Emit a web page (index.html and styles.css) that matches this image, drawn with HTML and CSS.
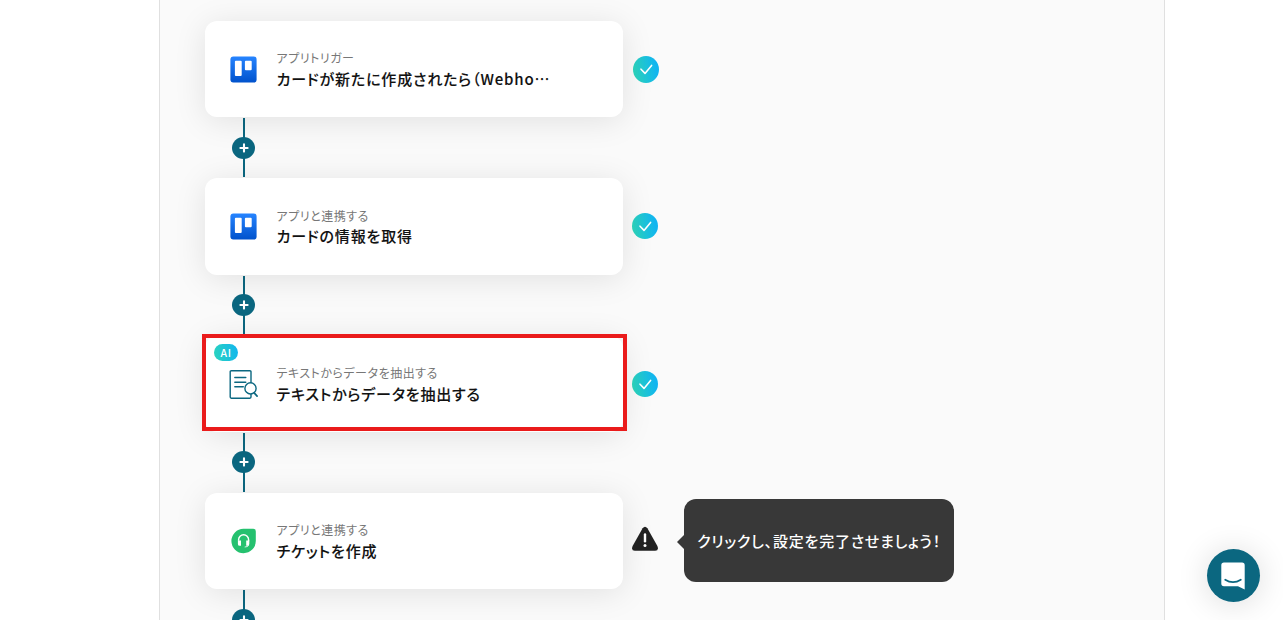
FILE: index.html
```html
<!DOCTYPE html>
<html lang="ja">
<head>
    <meta charset="UTF-8">
    <meta name="viewport" content="width=device-width, initial-scale=1.0">
    <title>フロー設定</title>
    <link rel="stylesheet" href="styles.css">
</head>
<body>
    <svg class="defs" width="0" height="0">
        <defs>
            <linearGradient id="trello" x1="0" y1="0" x2="0" y2="1">
                <stop offset="0" stop-color="#2684ff"/>
                <stop offset="1" stop-color="#0052cc"/>
            </linearGradient>
            <symbol id="icon-trello" viewBox="0 0 28 28">
                <rect x="1.4" y="1.4" width="26.2" height="26.2" rx="3" fill="url(#trello)"/>
                <rect x="5.9" y="5.7" width="6.8" height="15.4" rx="1" fill="#fff"/>
                <rect x="15.9" y="5.7" width="6.8" height="9.6" rx="1" fill="#fff"/>
            </symbol>
            <symbol id="icon-check" viewBox="0 0 26 26">
                <path d="M8 13.2l4 4.2 6.6-8" fill="none" stroke="#fff" stroke-width="1.6" stroke-linecap="round" stroke-linejoin="round"/>
            </symbol>
            <symbol id="icon-plus" viewBox="0 0 10 10">
                <path d="M5 1.4v7.2M1.4 5h7.2" fill="none" stroke="#fff" stroke-width="2.1" stroke-linecap="round"/>
            </symbol>
        </defs>
    </svg>

    <main class="canvas">
        <div class="step">
            <div class="card">
                <svg class="icon"><use href="#icon-trello"/></svg>
                <div class="text">
                    <p class="label">アプリトリガー</p>
                    <p class="title">カードが新たに作成されたら（Webho…</p>
                </div>
            </div>
            <span class="status first"><svg><use href="#icon-check"/></svg></span>
        </div>
        <div class="connector"><button class="add"><svg><use href="#icon-plus"/></svg></button></div>

        <div class="step">
            <div class="card">
                <svg class="icon"><use href="#icon-trello"/></svg>
                <div class="text">
                    <p class="label">アプリと連携する</p>
                    <p class="title">カードの情報を取得</p>
                </div>
            </div>
            <span class="status"><svg><use href="#icon-check"/></svg></span>
        </div>
        <div class="connector"><button class="add"><svg><use href="#icon-plus"/></svg></button></div>

        <div class="step">
            <div class="card selected">
                <span class="badge">AI</span>
                <svg class="icon" viewBox="0 0 28 28" fill="none" stroke="#0b6780" stroke-width="1.4" stroke-linecap="round">
                    <path d="M22 13V1.8Q22 .7 20.9.7H2.3Q1.2.7 1.2 1.8v25.3q0 1.1 1.1 1.1h18.6q1.1 0 1.1-1.1v-3"/>
                    <path d="M5.8 7.5h11M5.8 12.2h11M5.8 16.7h8.5"/>
                    <circle cx="21.5" cy="18.4" r="5.6" fill="#fff"/>
                    <path d="M25.4 23.2l2.7 2.9" stroke-width="1.7"/>
                </svg>
                <div class="text">
                    <p class="label">テキストからデータを抽出する</p>
                    <p class="title">テキストからデータを抽出する</p>
                </div>
            </div>
            <span class="status"><svg><use href="#icon-check"/></svg></span>
        </div>
        <div class="connector"><button class="add"><svg><use href="#icon-plus"/></svg></button></div>

        <div class="step">
            <div class="card">
                <svg class="icon" viewBox="0 0 28 28">
                    <path d="M14.5 1.8h9.7q2.6 0 2.6 2.6V14a12.2 12.2 0 1 1-12.3-12.2z" fill="#25c16f"/>
                    <path d="M9.6 13.8v-1a5 5 0 0 1 10 0v1.5" fill="none" stroke="#fff" stroke-width="1.4"/>
                    <path d="M8.9 13.5h3.1v5.3h-1.2q-1.9 0-1.9-1.9zM17.2 13.5h3.1v3.4q0 1.9-1.9 1.9h-1.2z" fill="#fff"/>
                    <path d="M19.5 18q0 2-3.8 2" fill="none" stroke="#fff" stroke-width=".8"/>
                </svg>
                <div class="text">
                    <p class="label">アプリと連携する</p>
                    <p class="title">チケットを作成</p>
                </div>
            </div>
            <svg class="warning" viewBox="0 0 28 26">
                <path d="M11.6 2.3q2.4-3.2 4.8 0l10 17.8q1.7 4.4-2.2 4.7H3.8q-3.9-.3-2.2-4.7z" fill="#222"/>
                <path d="M14 8.5v6.8" stroke="#fff" stroke-width="2.4" stroke-linecap="round"/>
                <circle cx="14" cy="19.5" r="1.5" fill="#fff"/>
            </svg>
            <div class="tooltip">クリックし、設定を完了させましょう！</div>
        </div>
        <div class="connector"><button class="add"><svg><use href="#icon-plus"/></svg></button></div>
    </main>

    <button class="chat">
        <svg viewBox="0 0 24 28">
            <path d="M3 .5h18q2.7 0 2.7 2.7v24.3l-6.7-3.2H3Q.3 24.3.3 21.6V3.2Q.3.5 3 .5z" fill="#fff"/>
            <path d="M4.2 17.7q7.8 5 15.6 0" fill="none" stroke="#0b6780" stroke-width="1.7" stroke-linecap="round"/>
        </svg>
    </button>
</body>
</html>
```

FILE: styles.css
```css
* {
    box-sizing: border-box;
}
body {
    margin: 0;
    height: 620px;
    overflow: hidden;
    background-color: #fff;
    color: #222;
    font-family: "Noto Sans CJK JP", "Noto Sans", sans-serif;
    font-feature-settings: "palt";
}
p {
    margin: 0;
}
button {
    padding: 0;
    border: none;
    cursor: pointer;
}
.defs {
    position: absolute;
}
.canvas {
    width: 1006px;
    height: 620px;
    margin-left: 159px;
    padding: 21px 0 0 45px;
    border-left: 1px solid #e0e0e0;
    border-right: 1px solid #e0e0e0;
    background-color: #fafafa;
    overflow: hidden;
}
.step {
    display: flex;
    align-items: center;
    height: 96.4px;
}
.card {
    position: relative;
    display: flex;
    align-items: center;
    width: 418px;
    height: 100%;
    padding-left: 24px;
    border-radius: 12px;
    background-color: #fff;
    box-shadow: 0 4px 32px rgba(0, 0, 0, 0.1);
}
.selected::after {
    content: "";
    position: absolute;
    inset: -1.4px -4px 1px -3px;
    border: 4px solid #ea1b1b;
}
.icon {
    width: 28px;
    height: 28px;
    overflow: visible;
}
.text {
    margin-left: 19.5px;
}
.label {
    color: #777;
    font-size: 12px;
    line-height: 20px;
    letter-spacing: 0.52px;
}
.title {
    margin-top: -0.4px;
    color: #111;
    font-size: 15px;
    font-weight: 500;
    line-height: 22px;
    letter-spacing: 0.84px;
    white-space: nowrap;
    -webkit-text-stroke: 0.1px #111;
}
.badge {
    position: absolute;
    top: 8.5px;
    left: 9px;
    width: 24px;
    height: 17px;
    border-radius: 9px;
    background: linear-gradient(80deg, #2bd4bd, #11b5f0);
    color: #fff;
    font-size: 10.5px;
    font-weight: 500;
    line-height: 17px;
    letter-spacing: 0.5px;
    text-align: center;
}
.status {
    width: 26px;
    height: 26px;
    margin-left: 9px;
    border-radius: 50%;
    background: linear-gradient(80deg, #2bd4bd 10%, #11b5f0 85%);
}
.status.first {
    height: 27px;
    margin-left: 10px;
}
.status svg {
    display: block;
    width: 26px;
    height: 26px;
}
.connector {
    display: flex;
    align-items: center;
    justify-content: center;
    width: 2px;
    height: 58.9px;
    margin: 1px 0 1px 38px;
    background-color: #0b6780;
}
.add {
    display: flex;
    flex: none;
    align-items: center;
    justify-content: center;
    width: 23px;
    height: 22px;
    margin-right: 1px;
    border-radius: 50%;
    background-color: #0b6780;
}
.add svg {
    width: 10px;
    height: 10px;
}
.warning {
    width: 28px;
    height: 26px;
    margin: 0 0 4px 8px;
}
.tooltip {
    position: relative;
    width: 270px;
    height: 83px;
    margin: 0 0 1.6px 25px;
    border-radius: 12px;
    background-color: #383838;
    color: #fff;
    font-size: 15px;
    font-weight: 500;
    line-height: 83px;
    letter-spacing: 0.78px;
    text-align: center;
    white-space: nowrap;
}
.tooltip::before {
    content: "";
    position: absolute;
    top: 36px;
    left: -7px;
    border: 7px solid transparent;
    border-right-color: #383838;
    border-left: none;
}
.chat {
    position: absolute;
    top: 549px;
    left: 1207px;
    display: flex;
    align-items: center;
    justify-content: center;
    width: 53px;
    height: 53px;
    border-radius: 50%;
    background-color: #0b6780;
    box-shadow: 0 2px 32px rgba(0, 0, 0, 0.14);
}
.chat svg {
    width: 24px;
    height: 28px;
    margin-right: 1px;
}
```
